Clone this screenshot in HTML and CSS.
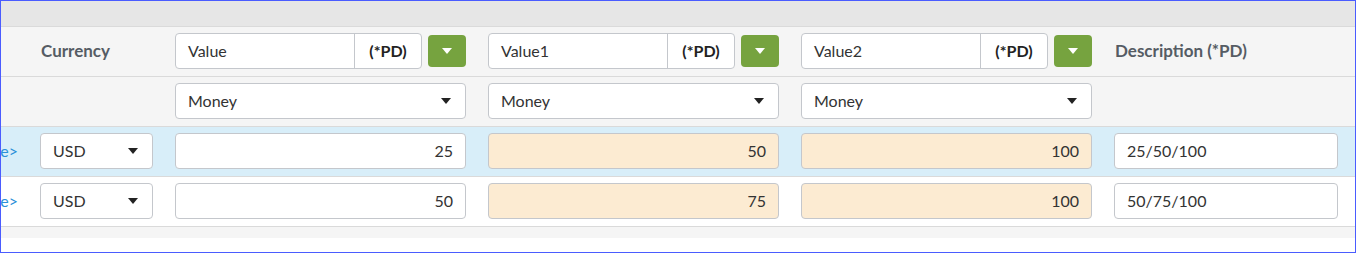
FILE: index.html
```html
<!DOCTYPE html>
<html>
<head>
<meta charset="utf-8">
<link rel="stylesheet" href="styles.css">
</head>
<body>
<div class="frame">
  <div class="topbar"></div>

  <div class="row head">
    <div class="cell clip"></div>
    <div class="cell label">Currency</div>
    <div class="cell combo">
      <div class="igroup"><span class="itext">Value</span><span class="addon">(*PD)</span></div>
      <button class="gbtn"><span class="caret white"></span></button>
    </div>
    <div class="cell combo">
      <div class="igroup"><span class="itext">Value1</span><span class="addon">(*PD)</span></div>
      <button class="gbtn"><span class="caret white"></span></button>
    </div>
    <div class="cell combo">
      <div class="igroup"><span class="itext">Value2</span><span class="addon">(*PD)</span></div>
      <button class="gbtn"><span class="caret white"></span></button>
    </div>
    <div class="cell label">Description (*PD)</div>
  </div>

  <div class="row head">
    <div class="cell clip"></div>
    <div class="cell"></div>
    <div class="cell"><div class="select"><span>Money</span><span class="caret"></span></div></div>
    <div class="cell"><div class="select"><span>Money</span><span class="caret"></span></div></div>
    <div class="cell"><div class="select"><span>Money</span><span class="caret"></span></div></div>
    <div class="cell"></div>
  </div>

  <div class="row data selected">
    <div class="cell clip"><span class="link">e&gt;</span></div>
    <div class="cell"><div class="select cur"><span>USD</span><span class="caret"></span></div></div>
    <div class="cell"><div class="input num">25</div></div>
    <div class="cell"><div class="input num calc">50</div></div>
    <div class="cell"><div class="input num calc">100</div></div>
    <div class="cell"><div class="input">25/50/100</div></div>
  </div>

  <div class="row data">
    <div class="cell clip"><span class="link">e&gt;</span></div>
    <div class="cell"><div class="select cur"><span>USD</span><span class="caret"></span></div></div>
    <div class="cell"><div class="input num">50</div></div>
    <div class="cell"><div class="input num calc">75</div></div>
    <div class="cell"><div class="input num calc">100</div></div>
    <div class="cell"><div class="input">50/75/100</div></div>
  </div>

  <div class="footer"></div>
</div>
</body>
</html>
```

FILE: styles.css
```css
* { box-sizing: border-box; }
html, body { margin: 0; padding: 0; background: #fff; }
body {
  font-family: "Lato", "Noto Sans", sans-serif;
  font-size: 16px;
  color: #333;
}
.frame {
  width: 1356px;
  height: 253px;
  border: 1px solid #4a5cff;
  background: #fff;
  overflow: hidden;
}
.topbar {
  height: 26px;
  background: #e6e6e6;
  border-bottom: 1px solid #dadada;
}
.row {
  display: grid;
  grid-template-columns: 17px 113px 291px 291px 291px 224px;
  column-gap: 22px;
  align-items: center;
  height: 50px;
  padding-bottom: 1px;
  border-bottom: 1px solid #dadada;
}
.row.head { background: #f5f5f5; }
.row.data { background: #fff; }
.row.data.selected { background: #d8eef9; }
.footer {
  height: 11px;
  background: #f5f5f5;
}
.cell { min-width: 0; }
.clip {
  display: flex;
  justify-content: flex-end;
  white-space: nowrap;
}
.link { color: #2a90d8; font-size: 16px; padding-bottom: 1px; }
.label {
  font-weight: 700;
  color: #555c64;
  font-size: 17px;
  padding-left: 1px;
  padding-bottom: 1px;
  white-space: nowrap;
}
.combo {
  display: flex;
  align-items: center;
  gap: 6px;
}
.igroup {
  flex: 1;
  height: 36px;
  display: flex;
  border: 1px solid #c4c7cc;
  border-radius: 4px;
  background: #fff;
  overflow: hidden;
}
.itext {
  flex: 1;
  display: flex;
  align-items: center;
  padding-left: 12px;
  padding-bottom: 1px;
  font-size: 16px;
}
.addon {
  width: 67px;
  border-left: 1px solid #c4c7cc;
  display: flex;
  align-items: center;
  justify-content: center;
  font-weight: 700;
  color: #222;
  font-size: 16px;
  padding-bottom: 1px;
}
.gbtn {
  width: 38px;
  height: 32px;
  border: 0;
  border-radius: 4px;
  background: #76a33f;
  display: flex;
  align-items: center;
  justify-content: center;
  padding: 0;
}
.caret {
  width: 0;
  height: 0;
  border-left: 5px solid transparent;
  border-right: 5px solid transparent;
  border-top: 6px solid #222;
}
.caret.white { border-top-color: #fff; }
.select {
  height: 36px;
  display: flex;
  align-items: center;
  justify-content: space-between;
  padding: 0 14px 1px 12px;
  border: 1px solid #c4c7cc;
  border-radius: 4px;
  background: #fff;
  font-size: 16px;
}
.input {
  height: 36px;
  display: flex;
  align-items: center;
  padding: 0 12px 1px;
  border: 1px solid #c4c7cc;
  border-radius: 4px;
  background: #fff;
  font-size: 16px;
}
.input.num { justify-content: flex-end; }
.input.calc { background: #fcebd2; }
```
